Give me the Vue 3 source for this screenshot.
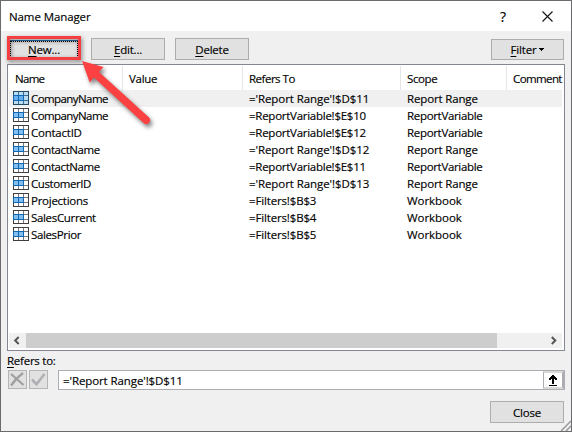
<script setup>
// "track" holds the letter spacing of each text in pixels
const columns = [
  { text: 'Name', track: -0.7 },
  { text: 'Value', track: -0.3 },
  { text: 'Refers To', track: -0.5 },
  { text: 'Scope', track: -0.4 },
  { text: 'Comment', track: -0.6 },
]
const reportRange = { text: 'Report Range', track: -0.15 }
const reportVariable = { text: 'ReportVariable', track: -0.32 }
const workbook = { text: 'Workbook', track: -0.05 }
const names = [
  { name: 'CompanyName', track: -0.58, refers: "='Report Range'!$D$11", refTrack: -0.08, scope: reportRange },
  { name: 'CompanyName', track: -0.58, refers: '=ReportVariable!$E$10', refTrack: -0.26, scope: reportVariable },
  { name: 'ContactID', track: -0.24, refers: '=ReportVariable!$E$12', refTrack: -0.26, scope: reportVariable },
  { name: 'ContactName', track: -0.43, refers: "='Report Range'!$D$12", refTrack: -0.08, scope: reportRange },
  { name: 'ContactName', track: -0.43, refers: '=ReportVariable!$E$11', refTrack: -0.26, scope: reportVariable },
  { name: 'CustomerID', track: -0.42, refers: "='Report Range'!$D$13", refTrack: -0.08, scope: reportRange },
  { name: 'Projections', track: -0.26, refers: '=Filters!$B$3', refTrack: -0.15, scope: workbook },
  { name: 'SalesCurrent', track: -0.33, refers: '=Filters!$B$4', refTrack: -0.15, scope: workbook },
  { name: 'SalesPrior', track: -0.36, refers: '=Filters!$B$5', refTrack: -0.15, scope: workbook },
]
const spacing = (px) => ({ letterSpacing: px + 'px' })
</script>

<template>
  <div class="dialog">
    <header class="titlebar">
      <h1>Name Manager</h1>
      <span class="help">?</span>
      <svg class="close-x" width="11" height="11" viewBox="0 0 11 11"><path d="M.5.5l10 10M10.5.5l-10 10" stroke="#111" stroke-width="1.1" fill="none" /></svg>
    </header>

    <main class="body">
      <div class="toolbar">
        <button class="btn focused"><span><u>N</u>ew...</span></button>
        <button class="btn"><span><u>E</u>dit...</span></button>
        <button class="btn"><span><u>D</u>elete</span></button>
        <button class="btn filter"><span><u>F</u>ilter</span><svg width="5" height="3" viewBox="0 0 5 3"><path d="M0 0h5v1H4v1H3v1H2V2H1V1H0z" fill="#000" /></svg></button>
      </div>

      <div class="list">
        <div class="grid head">
          <span v-for="c in columns" :key="c.text" class="th" :style="spacing(c.track)">{{ c.text }}</span>
        </div>
        <div class="rows">
          <div v-for="(n, i) in names" :key="i" class="grid row" :class="{ selected: i === 0 }">
            <span class="name">
              <svg width="16" height="14" viewBox="0 0 16 14" shape-rendering="crispEdges">
                <rect width="16" height="14" :fill="i === 0 ? '#244a66' : '#403e3e'" />
                <rect x="1" y="1" width="14" height="12" :fill="i === 0 ? '#b9dcf3' : '#fff'" />
                <path d="M5.5 1v12M10.5 1v12M1 4.5h14M1 9.5h14" :stroke="i === 0 ? '#3c6d91' : '#777'" />
                <rect y="4" width="11" height="6" fill="#1068b4" />
                <path d="M1 5h4v4H1zM6 5h4v4H6z" :fill="i === 0 ? '#65b0ec' : '#83bef0'" />
              </svg>
              <span class="cell" :style="spacing(n.track)">{{ n.name }}</span>
            </span>
            <span></span>
            <span class="cell refers" :style="spacing(n.refTrack)">{{ n.refers }}</span>
            <span class="cell scope" :style="spacing(n.scope.track)">{{ n.scope.text }}</span>
            <span></span>
          </div>
        </div>
        <div class="scrollbar">
          <svg width="19" height="15" viewBox="0 0 19 15"><path d="M11.7 4L8.2 7.5l3.5 3.5" stroke="#555" stroke-width="2" fill="none" /></svg>
          <div class="thumb"></div>
          <svg class="right" width="19" height="15" viewBox="0 0 19 15"><path d="M8.8 4l3.5 3.5L8.8 11" stroke="#555" stroke-width="2" fill="none" /></svg>
        </div>
      </div>

      <label class="label"><span><u>R</u>efers to:</span></label>
      <div class="formula">
        <button class="mini"><svg width="17" height="17" viewBox="0 0 17 17"><path d="M2 3L14.5 14M14 2Q7 7 2 14.5" stroke="#a0a0a3" stroke-width="2.3" fill="none" /></svg></button>
        <button class="mini"><svg width="17" height="17" viewBox="0 0 17 17"><path d="M2 8.5l4.5 4.7L14.5 3" stroke="#b0b0b4" stroke-width="2.6" fill="none" /></svg></button>
        <div class="input">
          <span>='Report Range'!$D$11</span>
          <div class="collapse"><svg width="14" height="13" viewBox="0 0 14 13" shape-rendering="crispEdges"><path d="M6 1h2v1h1v1h1v1h1v2H9V5H8v5H6V5H5v1H3V4h1V3h1V2h1z" fill="#000" /><path d="M3 11.5h8" stroke="#000" /></svg></div>
        </div>
      </div>

      <div class="footer"><button class="btn"><span>Close</span></button></div>
    </main>

    <svg class="grip" width="11" height="11" viewBox="0 0 11 11"><path d="M1 11L11 1M6 11l5-5" stroke="#999" stroke-width="1.5" /></svg>
    <div class="highlight"></div>
    <svg class="arrow" width="90" height="80" viewBox="0 0 90 80">
      <path d="M7 5L28.500 11 24 16 73.800 61.200A3.900 3.900 0 0 1 68.500 67L19 21.500 14.700 26.500z" fill="#fb4141" />
    </svg>
  </div>
</template>

<style>
body { margin: 0; overflow: hidden; }
</style>

<style scoped>
* { box-sizing: border-box; }
.dialog {
  position: relative;
  width: 572px;
  height: 432px;
  border: 1px solid #6b6b6d;
  background: #f0f0f0;
  color: #000;
  font: 11.5px/17px "Open Sans", "Noto Sans", sans-serif;
  -webkit-text-stroke: 0.15px #000;
  white-space: nowrap;
  overflow: hidden;
}
.titlebar {
  height: 30px;
  padding: 0 18px 0 8px;
  background: #fff;
  display: flex;
  align-items: center;
}
h1 { margin: 0; flex: 1; font-size: 11.5px; font-weight: 400; letter-spacing: -0.1px; }
.help { font-size: 14px; margin-right: 36px; }
.body { padding: 7px 6px 0; }
.toolbar { display: flex; align-items: flex-end; gap: 10px; height: 22px; }
.btn {
  width: 74px;
  height: 22px;
  padding: 0;
  border: 1px solid #adadad;
  background: #e1e1e1;
  color: #000;
  font: inherit;
  letter-spacing: -0.2px;
  display: flex;
  align-items: center;
  justify-content: center;
}
u { text-underline-offset: 2px; text-decoration-thickness: 1px; }
.focused { border: 1px dotted #000; box-shadow: 0 -1px #2a6fae; width: 68px; height: 17px; margin: 0 3px 2px; }
.filter { margin-left: auto; margin-right: 1px; width: 73px; height: 21px; gap: 3px; }
.list {
  margin-top: 4px;
  height: 287px;
  border: 1px solid #828790;
  background: #fff;
  padding: 1px;
  display: flex;
  flex-direction: column;
}
.grid { display: grid; grid-template-columns: 114px 120px 158px 106px 1fr; padding-right: 1px; }
.head { height: 24px; }
.th { border-right: 1px solid #e5e5e5; padding-left: 6px; line-height: 25px; }
.th:last-child { border: 0; }
.rows { flex: 1; }
.row { height: 17px; background-clip: content-box; }
.cell { line-height: 18px; }
.row.selected { background-color: #f0f0f0; }
.name { display: flex; align-items: flex-start; gap: 2px; padding-left: 4px; }
.name svg { margin-top: 1px; }
.refers, .scope { padding-left: 6px; }
.scrollbar { height: 15px; margin-bottom: 1px; background: #f0f0f0; display: flex; margin-right: 1px; }
.scrollbar svg { flex: none; margin-left: -2px; margin-right: 0; }
.thumb { width: 471px; background: #cdcdcd; }
.scrollbar .right { margin-left: auto; }
.label { display: block; height: 19px; line-height: 20px; letter-spacing: -0.25px; }
.formula { display: flex; gap: 2px; padding-left: 1px; }
.mini { width: 19px; height: 19px; border: 1px solid #b5b5b8; background: #e1e1e1; padding: 0; display: flex; }
.input {
  margin-left: 8px;
  flex: 1;
  height: 20px;
  border: 1px solid #abadb3;
  background: #fff;
  padding-left: 4px;
  letter-spacing: -0.1px;
  display: flex;
  align-items: center;
  justify-content: space-between;
}
.input > span { line-height: 19px; }
.collapse { width: 21px; height: 18px; border: 2px solid #d8d8d8; border-left: 1px solid #abadb3; border-right-color: #abadb3; display: flex; align-items: center; justify-content: center; }
.footer { display: flex; justify-content: flex-end; margin-top: 11px; padding-right: 1px; }
.grip { position: absolute; right: 0; bottom: 0; }
.highlight {
  position: absolute;
  left: 6px;
  top: 35px;
  width: 74px;
  height: 24px;
  border: 3px solid #f43f42;
  filter: drop-shadow(1px 2px 2px rgba(0, 0, 0, .5));
}
.arrow { position: absolute; left: 74px; top: 55px; filter: drop-shadow(2px 3px 2px rgba(0, 0, 0, .5)); }
</style>
